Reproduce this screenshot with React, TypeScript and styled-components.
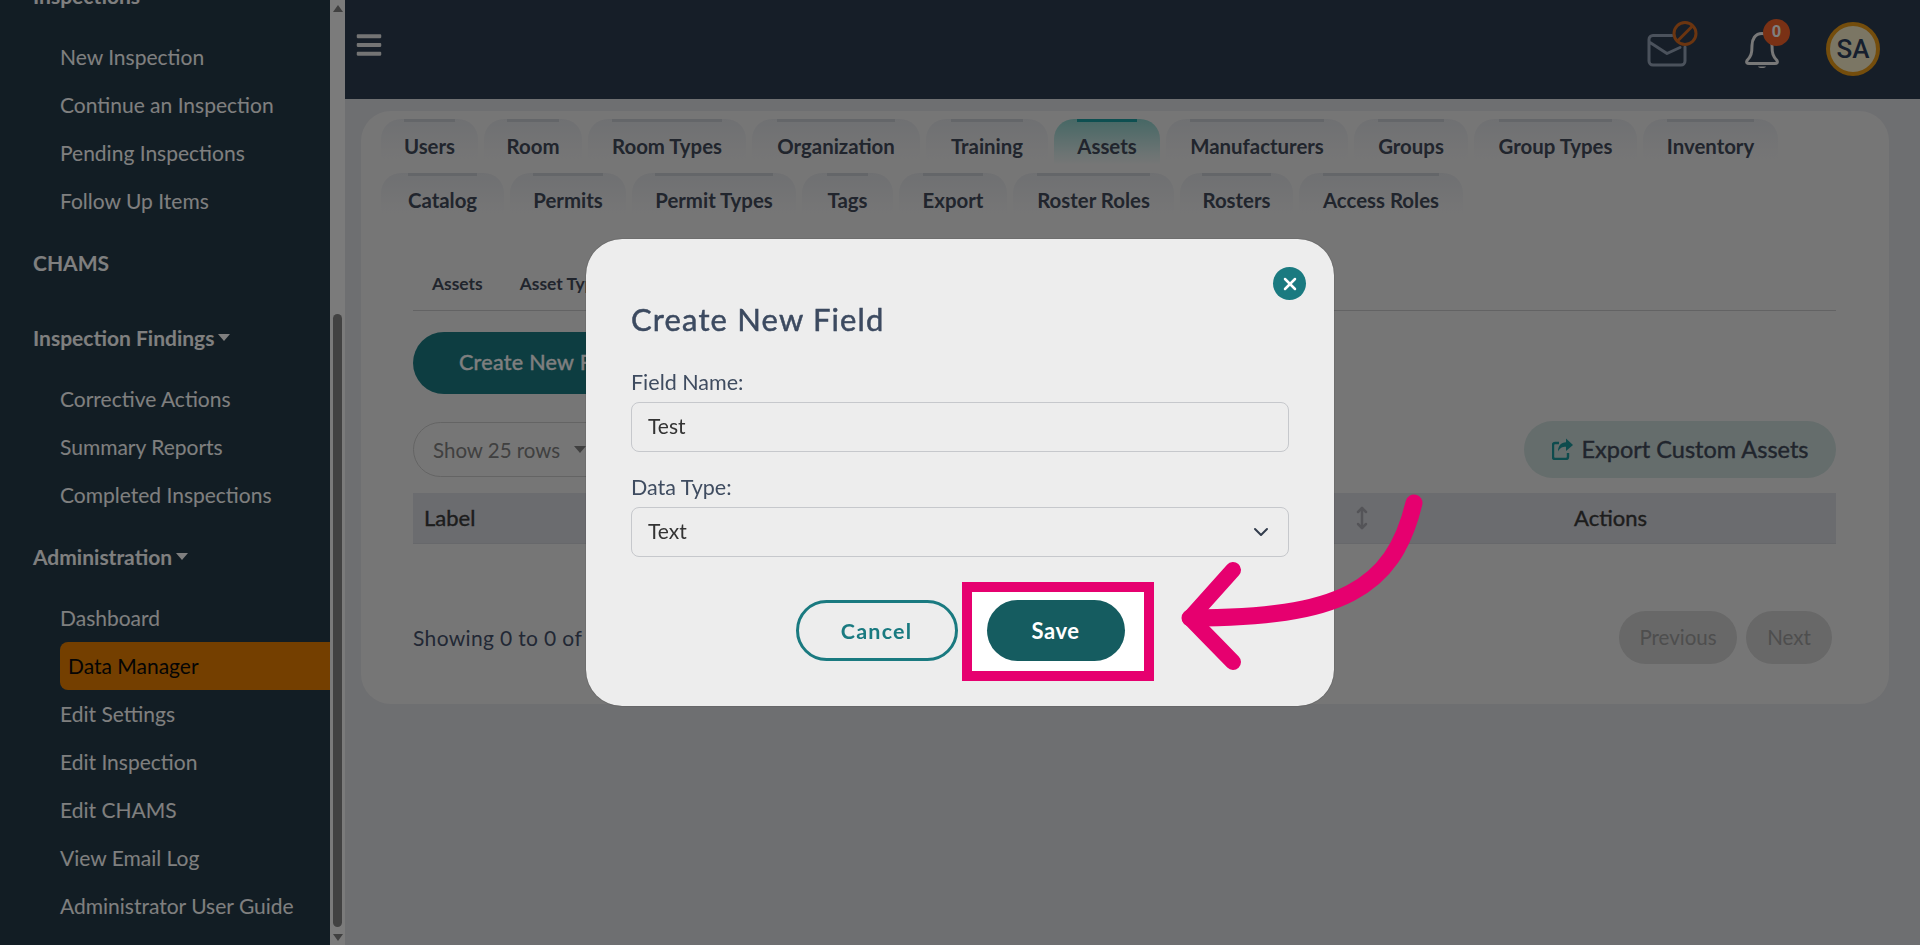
import React from "react";
import styled, { createGlobalStyle } from "styled-components";
import { MoveVertical, ChevronDown, X } from "lucide-react";
import { FaBars } from "react-icons/fa";

const Global = createGlobalStyle`
  html, body { margin: 0; height: 100%; overflow: hidden; background: #dddee2; }
  * { box-sizing: border-box; }
  #root { height: 100%; }
`;

const body = `"Lato", "Noto Sans", sans-serif`;

const Page = styled.div`
  display: flex;
  height: 945px;
  overflow: hidden;
  font-family: ${body};
`;

const Sidebar = styled.nav`
  width: 330px;
  flex: none;
  background: #243a48;
  overflow: hidden;
  color: #fff;
  font-size: 21px;
`;

const SideScroll = styled.div`
  display: flex;
  flex-direction: column;
  margin-top: -42px;
`;

const SectionTitle = styled.div`
  display: flex;
  align-items: center;
  flex: none;
  height: 48px;
  margin: 14px 0 13px;
  padding: 0 0 2px 33px;
  font-weight: 700;
`;

const Caret = styled.span`
  width: 0;
  height: 0;
  margin-left: 4px;
  border-left: 6.5px solid transparent;
  border-right: 6.5px solid transparent;
  border-top: 7px solid #fff;
`;

const SideItem = styled.div<{ $active?: boolean }>`
  display: flex;
  align-items: center;
  flex: none;
  height: 48px;
  margin-left: ${(p) => (p.$active ? "60px" : "0")};
  padding: 0 0 2px ${(p) => (p.$active ? "8px" : "60px")};
  background: ${(p) => (p.$active ? "#e87f00" : "transparent")};
  color: ${(p) => (p.$active ? "#0a0a0a" : "#fff")};
  border-radius: ${(p) => (p.$active ? "8px 0 0 8px" : "0")};
`;

const Scrollbar = styled.div`
  width: 15px;
  flex: none;
  background: #f6f6f6;
  display: flex;
  flex-direction: column;
  align-items: center;
  padding: 5px 0 4px;
`;

const ScrollArrow = styled.span<{ $down?: boolean }>`
  width: 0;
  height: 0;
  border-left: 5px solid transparent;
  border-right: 5px solid transparent;
  ${(p) => (p.$down ? "border-top: 7px solid #808080;" : "border-bottom: 7px solid #808080;")}
`;

const ScrollThumb = styled.div`
  width: 9px;
  height: 613px;
  margin-top: auto;
  margin-bottom: 7px;
  border-radius: 5px;
  background: #858585;
`;

const Main = styled.div`
  flex: 1;
  min-width: 0;
  display: flex;
  flex-direction: column;
`;

const Header = styled.header`
  height: 99px;
  flex: none;
  background: #2c3c50;
  display: flex;
  align-items: center;
  padding: 0 40px 0 10px;
`;

const Burger = styled.div`
  display: flex;
  color: #e8e8e8;
  margin-bottom: 10px;
`;

const HeaderIcons = styled.div`
  margin-left: auto;
  display: flex;
  align-items: center;
`;

const IconSlot = styled.div<{ $w: number }>`
  position: relative;
  width: ${(p) => p.$w}px;
  height: 54px;
  svg {
    display: block;
    overflow: visible;
  }
`;

const Badge = styled.span`
  position: absolute;
  left: 18px;
  top: -4px;
  width: 27px;
  height: 27px;
  border-radius: 50%;
  background: #f4622a;
  color: #fff;
  font: 700 17px "Liberation Sans", sans-serif;
  display: flex;
  align-items: center;
  justify-content: center;
`;

const Avatar = styled.div`
  width: 54px;
  height: 54px;
  border-radius: 50%;
  border: 4px solid #e89a18;
  background: #f6edc8;
  color: #2c3f5c;
  font: 500 26px "Roboto", "Liberation Sans", sans-serif;
  display: flex;
  align-items: center;
  justify-content: center;
  margin-bottom: 2px;
`;

const Content = styled.div`
  flex: 1;
  padding: 12px 31px 0 16px;
  background: #dddee2;
`;

const Card = styled.section`
  background: #ededed;
  border-radius: 30px;
  padding: 8px 20px 40px;
  height: 593px;
`;

const Tabs = styled.div`
  display: flex;
  flex-wrap: wrap;
  gap: 8px 6px;
`;

const Tab = styled.div<{ $w: number; $active?: boolean }>`
  width: ${(p) => p.$w}px;
  height: 46px;
  border-radius: 20px 20px 0 0;
  display: flex;
  flex-direction: column;
  align-items: center;
  background: linear-gradient(
    ${(p) => (p.$active ? "#8ed0cb" : "#dfe1e5")},
    ${(p) => (p.$active ? "#d8e8e7" : "#ebebec")} 75%,
    #ededed
  );
  font-size: 20.4px;
  font-weight: 700;
  color: #424a5a;
`;

const TabLabel = styled.span<{ $active?: boolean }>`
  height: 46px;
  line-height: 48px;
  border-top: 3px solid ${(p) => (p.$active ? "#1d9ea2" : "#c9ccd3")};
  white-space: nowrap;
`;

const Section = styled.div`
  padding: 37px 33px 0 32px;
`;

const SubTabs = styled.div`
  display: flex;
  gap: 37px;
  height: 55px;
  align-items: center;
  padding-left: 19px;
  border-bottom: 1px solid #c6c7c9;
  font-size: 17.4px;
  font-weight: 700;
  color: #424a5a;
`;

const CreateButton = styled.div`
  margin-top: 21px;
  height: 62px;
  width: 300px;
  border-radius: 31px;
  background: #1a7a82;
  color: #fff;
  font-size: 21.5px;
  font-weight: 400;
  -webkit-text-stroke: 0.4px #fff;
  letter-spacing: 0.3px;
  display: flex;
  align-items: center;
  padding: 0 0 2px 46px;
`;

const Controls = styled.div`
  margin-top: 27px;
  display: flex;
  justify-content: space-between;
  align-items: center;
  height: 57px;
`;

const RowsSelect = styled.div`
  width: 240px;
  height: 55px;
  border: 1px solid #c8c8c8;
  border-radius: 28px;
  padding-left: 19px;
  display: flex;
  align-items: center;
  gap: 14px;
  font-size: 20.5px;
  color: #808080;
`;

const SmallCaret = styled.span`
  width: 0;
  height: 0;
  border-left: 6.5px solid transparent;
  border-right: 6.5px solid transparent;
  border-top: 7px solid #808080;
`;

const ExportButton = styled.div`
  width: 312px;
  height: 57px;
  border-radius: 29px;
  background: #cadad8;
  display: flex;
  align-items: center;
  justify-content: center;
  gap: 9px;
  padding-bottom: 2px;
  font-size: 23.5px;
  font-weight: 400;
  -webkit-text-stroke: 0.4px #424a5a;
  color: #424a5a;
`;

const ExportIcon = styled.svg`
  color: #1c969a;
  flex: none;
`;

const TableHead = styled.div`
  margin-top: 15px;
  height: 51px;
  background: #d7d8df;
  border-bottom: 1px solid #cfd0d6;
  display: flex;
  align-items: center;
  font-size: 22px;
  font-weight: 400;
  -webkit-text-stroke: 0.4px #3a3a3a;
  color: #3a3a3a;
`;

const HeadLabel = styled.span`
  flex: 1;
  padding: 0 0 1px 11px;
`;

const SortIcon = styled.span`
  display: flex;
  margin-right: 11px;
  color: #a9a9b0;
`;

const HeadActions = styled.span`
  width: 451px;
  padding-bottom: 1px;
  text-align: center;
`;

const Footer = styled.div`
  margin-top: 67px;
  height: 53px;
  display: flex;
  align-items: center;
  justify-content: space-between;
  padding-right: 4px;
  font-size: 21px;
  letter-spacing: 0.35px;
  color: #45516a;
`;

const Pager = styled.div`
  display: flex;
  gap: 9px;
`;

const PageButton = styled.div<{ $w: number }>`
  width: ${(p) => p.$w}px;
  height: 53px;
  border-radius: 27px;
  background: #d0d0d0;
  color: #9c9c9c;
  display: flex;
  align-items: center;
  justify-content: center;
  padding-bottom: 2px;
  font-size: 20.5px;
  letter-spacing: 0;
`;

const Overlay = styled.div`
  position: fixed;
  inset: 0;
  background: rgba(0, 0, 0, 0.5);
  display: flex;
  align-items: center;
  justify-content: center;
`;

const Modal = styled.div`
  position: relative;
  width: 748px;
  height: 467px;
  background: #ededed;
  border-radius: 36px;
  padding: 62px 45px 0 45px;
  box-shadow: 0 0 1px #222;
  font-family: ${body};
`;

const CloseButton = styled.div`
  position: absolute;
  top: 28px;
  right: 28px;
  width: 33px;
  height: 33px;
  border-radius: 50%;
  background: #1a7a80;
  color: #fff;
  display: flex;
  align-items: center;
  justify-content: center;
`;

const Title = styled.h2`
  margin: 0 0 33px;
  font-size: 31px;
  line-height: 36px;
  font-weight: 400;
  -webkit-text-stroke: 0.5px #3c4a60;
  color: #3c4a60;
  letter-spacing: 1.15px;
`;

const FieldLabel = styled.div`
  height: 24px;
  line-height: 24px;
  margin-bottom: 8px;
  font-size: 21.5px;
  color: #3f4c60;
`;

const FieldBox = styled.div`
  height: 50px;
  margin-bottom: 23px;
  border: 1px solid #c6c8cc;
  border-radius: 8px;
  padding: 0 15px 4px 16px;
  display: flex;
  align-items: center;
  justify-content: space-between;
  font-size: 21px;
  color: #333;
  svg {
    color: #333d4d;
    margin-top: 4px;
  }
`;

const Actions = styled.div`
  margin-top: 43px;
  display: flex;
  justify-content: center;
  gap: 29px;
`;

const CancelButton = styled.div`
  width: 162px;
  height: 61px;
  border: 3px solid #1a7a80;
  border-radius: 31px;
  color: #1a7a80;
  font-size: 21.5px;
  font-weight: 700;
  letter-spacing: 1.2px;
  display: flex;
  align-items: center;
  justify-content: center;
`;

const SaveWrap = styled.div`
  position: relative;
`;

const Highlight = styled.div`
  position: absolute;
  inset: -18px -29px -20px -25px;
  background: #fff;
  border: 10px solid #e6006f;
`;

const SaveButton = styled.div`
  position: relative;
  width: 138px;
  height: 61px;
  border-radius: 31px;
  background: #155c60;
  color: #fff;
  font-size: 22px;
  font-weight: 700;
  letter-spacing: 0.6px;
  display: flex;
  align-items: center;
  justify-content: center;
`;

const ArrowLayer = styled.svg`
  position: absolute;
  left: 0;
  top: 0;
  pointer-events: none;
`;

const tabs = [
  ["Users", 97],
  ["Room", 98],
  ["Room Types", 158],
  ["Organization", 168],
  ["Training", 122],
  ["Assets", 106, true],
  ["Manufacturers", 182],
  ["Groups", 114],
  ["Group Types", 163],
  ["Inventory", 135],
  ["Catalog", 123],
  ["Permits", 116],
  ["Permit Types", 164],
  ["Tags", 91],
  ["Export", 108],
  ["Roster Roles", 161],
  ["Rosters", 113],
  ["Access Roles", 164],
] as [string, number, boolean?][];

const section = (items: string[], active?: string) =>
  items.map((t) => (
    <SideItem key={t} $active={t === active}>
      {t}
    </SideItem>
  ));

export default function App() {
  return (
    <>
      <Global />
      <Page>
        <Sidebar>
          <SideScroll>
            <SectionTitle>
              Inspections
              <Caret />
            </SectionTitle>
            {section(["New Inspection", "Continue an Inspection", "Pending Inspections", "Follow Up Items"])}
            <SectionTitle>CHAMS</SectionTitle>
            <SectionTitle>
              Inspection Findings
              <Caret />
            </SectionTitle>
            {section(["Corrective Actions", "Summary Reports", "Completed Inspections"])}
            <SectionTitle>
              Administration
              <Caret />
            </SectionTitle>
            {section(
              [
                "Dashboard",
                "Data Manager",
                "Edit Settings",
                "Edit Inspection",
                "Edit CHAMS",
                "View Email Log",
                "Administrator User Guide",
              ],
              "Data Manager"
            )}
          </SideScroll>
        </Sidebar>
        <Scrollbar>
          <ScrollArrow />
          <ScrollThumb />
          <ScrollArrow $down />
        </Scrollbar>
        <Main>
          <Header>
            <Burger>
              <FaBars size={28} />
            </Burger>
            <HeaderIcons>
              <IconSlot $w={97}>
                <svg width="60" height="54" viewBox="0 0 60 54" fill="none">
                  <path
                    d="M24 12.5H5a4 4 0 0 0-4 4V38a4 4 0 0 0 4 4H33a4 4 0 0 0 4-4V24M2 19.5L19 30.5L32 24.5"
                    stroke="#96a4b8"
                    strokeWidth="3"
                    strokeLinecap="round"
                    strokeLinejoin="round"
                  />
                  <circle cx="37" cy="10.5" r="11" stroke="#d66a20" strokeWidth="3" />
                  <path d="M29.5 18L44.5 3" stroke="#d66a20" strokeWidth="3" />
                </svg>
              </IconSlot>
              <IconSlot $w={81}>
                <svg width="40" height="54" viewBox="0 0 40 54" fill="none">
                  <g transform="translate(0 4.5)">
                    <path
                      d="M17 6c-7 0-10 6-10 12 0 8-1 11-5 15-1 2 0 3 2 3h26c2 0 3-1 2-3-4-4-5-7-5-15 0-6-3-12-10-12Z"
                      stroke="#f0f0f0"
                      strokeWidth="3"
                      strokeLinejoin="round"
                    />
                    <path d="M13 39c1 2 7 2 8 0Z" fill="#f0f0f0" />
                  </g>
                </svg>
                <Badge>0</Badge>
              </IconSlot>
              <Avatar>SA</Avatar>
            </HeaderIcons>
          </Header>
          <Content>
            <Card>
              <Tabs>
                {tabs.map(([label, w, active]) => (
                  <Tab key={label} $w={w} $active={active}>
                    <TabLabel $active={active}>{label}</TabLabel>
                  </Tab>
                ))}
              </Tabs>
              <Section>
                <SubTabs>
                  <span>Assets</span>
                  <span>Asset Types</span>
                  <span>Custom Fields</span>
                </SubTabs>
                <CreateButton>Create New Field</CreateButton>
                <Controls>
                  <RowsSelect>
                    Show 25 rows
                    <SmallCaret />
                  </RowsSelect>
                  <ExportButton>
                    <ExportIcon width="21" height="22" viewBox="0 0 21 22" fill="none">
                      <path
                        d="M7 5H3a2 2 0 0 0-2 2v12a2 2 0 0 0 2 2h11a2 2 0 0 0 2-2v-4"
                        stroke="currentColor"
                        strokeWidth="2.4"
                      />
                      <path d="M21 7l-7-6.5v3.8C9 4.5 6 8 6 13.5 8 10 10 8.8 14 8.8v4.2z" fill="currentColor" />
                    </ExportIcon>
                    Export Custom Assets
                  </ExportButton>
                </Controls>
                <TableHead>
                  <HeadLabel>Label</HeadLabel>
                  <SortIcon>
                    <MoveVertical size={24} strokeWidth={2.5} />
                  </SortIcon>
                  <HeadActions>Actions</HeadActions>
                </TableHead>
                <Footer>
                  <span>Showing 0 to 0 of 0 entries</span>
                  <Pager>
                    <PageButton $w={118}>Previous</PageButton>
                    <PageButton $w={86}>Next</PageButton>
                  </Pager>
                </Footer>
              </Section>
            </Card>
          </Content>
        </Main>
      </Page>
      <Overlay>
        <Modal>
          <CloseButton>
            <X size={20} strokeWidth={3} />
          </CloseButton>
          <Title>Create New Field</Title>
          <FieldLabel>Field Name:</FieldLabel>
          <FieldBox>Test</FieldBox>
          <FieldLabel>Data Type:</FieldLabel>
          <FieldBox>
            Text
            <ChevronDown size={24} />
          </FieldBox>
          <Actions>
            <CancelButton>Cancel</CancelButton>
            <SaveWrap>
              <Highlight />
              <SaveButton>Save</SaveButton>
            </SaveWrap>
          </Actions>
        </Modal>
        <ArrowLayer width="1920" height="945" viewBox="0 0 1920 945" fill="none">
          <path
            d="M1414 503C1393 590 1340 618 1190 618"
            stroke="#e6006f"
            strokeWidth="17"
            strokeLinecap="round"
          />
          <path
            d="M1233 570L1190 618L1233 662"
            stroke="#e6006f"
            strokeWidth="16"
            strokeLinecap="round"
            strokeLinejoin="round"
            fill="none"
          />
        </ArrowLayer>
      </Overlay>
    </>
  );
}
